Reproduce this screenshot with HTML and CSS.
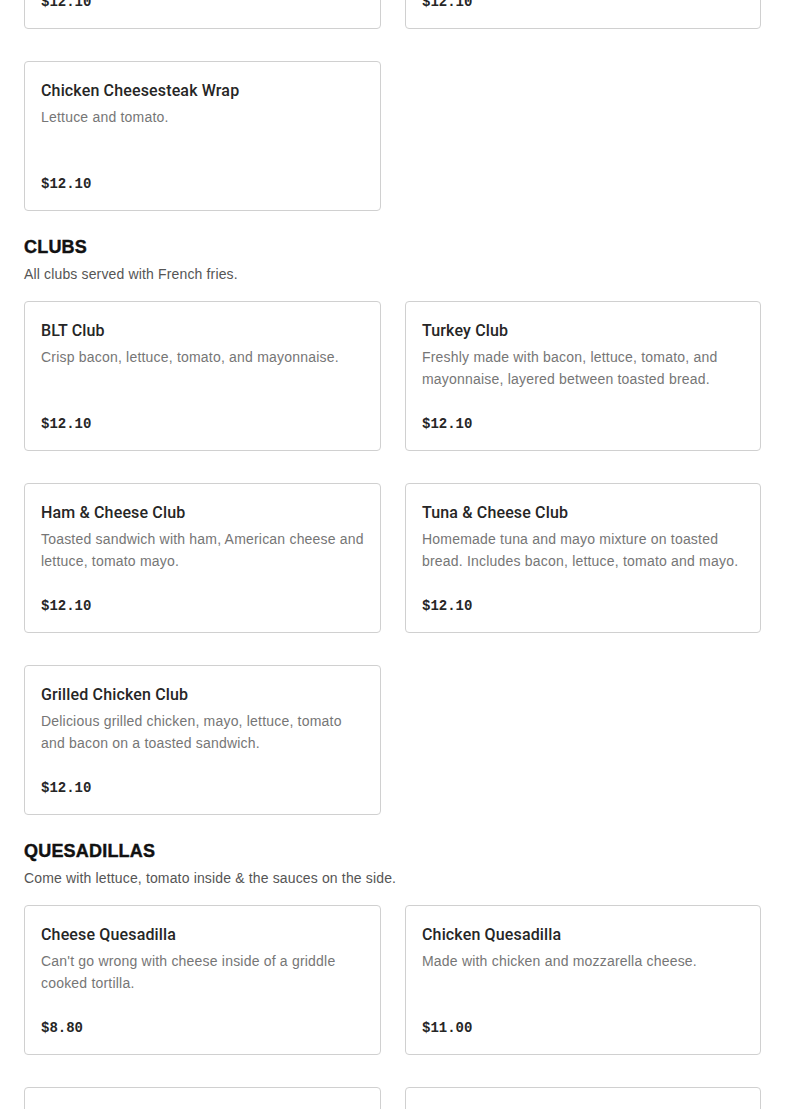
FILE: index.html
```html
<!DOCTYPE html>
<html lang="en">
<head>
<meta charset="utf-8">
<title>Menu</title>
<link rel="stylesheet" href="styles.css">
</head>
<body>
<main class="menu">
  <section class="section section-cut">
    <div class="grid">
      <article class="card">
        <h3 class="item-title">Chicken Caesar Wrap</h3>
        <p class="item-desc">Grilled chicken, romaine lettuce and Caesar dressing.</p>
        <p class="item-price">$12.10</p>
      </article>
      <article class="card">
        <h3 class="item-title">Buffalo Chicken Wrap</h3>
        <p class="item-desc">Crispy chicken tossed in buffalo sauce.</p>
        <p class="item-price">$12.10</p>
      </article>
      <article class="card">
        <h3 class="item-title">Chicken Cheesesteak Wrap</h3>
        <p class="item-desc">Lettuce and tomato.</p>
        <p class="item-price">$12.10</p>
      </article>
    </div>
  </section>

  <section class="section">
    <h2 class="section-title">CLUBS</h2>
    <p class="section-sub">All clubs served with French fries.</p>
    <div class="grid">
      <article class="card">
        <h3 class="item-title">BLT Club</h3>
        <p class="item-desc">Crisp bacon, lettuce, tomato, and mayonnaise.</p>
        <p class="item-price">$12.10</p>
      </article>
      <article class="card">
        <h3 class="item-title">Turkey Club</h3>
        <p class="item-desc">Freshly made with bacon, lettuce, tomato, and mayonnaise, layered between toasted bread.</p>
        <p class="item-price">$12.10</p>
      </article>
      <article class="card">
        <h3 class="item-title">Ham &amp; Cheese Club</h3>
        <p class="item-desc">Toasted sandwich with ham, American cheese and lettuce, tomato mayo.</p>
        <p class="item-price">$12.10</p>
      </article>
      <article class="card">
        <h3 class="item-title">Tuna &amp; Cheese Club</h3>
        <p class="item-desc">Homemade tuna and mayo mixture on toasted bread. Includes bacon, lettuce, tomato and mayo.</p>
        <p class="item-price">$12.10</p>
      </article>
      <article class="card">
        <h3 class="item-title">Grilled Chicken Club</h3>
        <p class="item-desc">Delicious grilled chicken, mayo, lettuce, tomato and bacon on a toasted sandwich.</p>
        <p class="item-price">$12.10</p>
      </article>
    </div>
  </section>

  <section class="section">
    <h2 class="section-title">QUESADILLAS</h2>
    <p class="section-sub">Come with lettuce, tomato inside &amp; the sauces on the side.</p>
    <div class="grid">
      <article class="card">
        <h3 class="item-title">Cheese Quesadilla</h3>
        <p class="item-desc">Can't go wrong with cheese inside of a griddle cooked tortilla.</p>
        <p class="item-price">$8.80</p>
      </article>
      <article class="card">
        <h3 class="item-title">Chicken Quesadilla</h3>
        <p class="item-desc">Made with chicken and mozzarella cheese.</p>
        <p class="item-price">$11.00</p>
      </article>
      <article class="card">
        <h3 class="item-title">Veggie Quesadilla</h3>
        <p class="item-desc">Peppers, onions and mozzarella cheese.</p>
        <p class="item-price">$9.90</p>
      </article>
      <article class="card">
        <h3 class="item-title">Steak Quesadilla</h3>
        <p class="item-desc">Made with steak and mozzarella cheese.</p>
        <p class="item-price">$12.10</p>
      </article>
    </div>
  </section>
</main>
</body>
</html>
```

FILE: styles.css
```css
* { box-sizing: border-box; }

html, body {
  margin: 0;
  padding: 0;
  background: #ffffff;
  overflow: hidden;
}

body {
  font-family: "Liberation Sans", Arial, sans-serif;
  color: #2b2b2b;
}

.menu {
  padding: 0 24px;
  width: 785px;
}

.section {
  margin-top: 25px;
}

.section-cut {
  margin-top: -121px;
}

.section-title {
  margin: 0;
  font-family: "Liberation Sans", Arial, sans-serif;
  font-weight: 900;
  font-size: 18px;
  line-height: 22px;
  color: #111111;
  letter-spacing: 0.2px;
  -webkit-text-stroke: 0.4px #111111;
}

.section-sub {
  margin: 5px 0 16px 0;
  font-size: 14px;
  line-height: 22px;
  color: #555555;
  letter-spacing: 0.15px;
}

.grid {
  display: grid;
  grid-template-columns: 357px 356px;
  column-gap: 24px;
  row-gap: 32px;
}

.card {
  display: flex;
  flex-direction: column;
  min-height: 150px;
  padding: 17px 16px 15px 16px;
  border: 1px solid #d0d0d0;
  border-radius: 4px;
  background: #ffffff;
}

.item-title {
  margin: 0;
  font-family: Roboto, "Liberation Sans", Arial, sans-serif;
  font-size: 16px;
  font-weight: 500;
  line-height: 24px;
  color: #262626;
  letter-spacing: 0.15px;
}

.item-desc {
  margin: 3px 0 0 0;
  font-size: 14px;
  line-height: 22px;
  color: #767676;
  letter-spacing: 0.2px;
}

.item-price {
  margin: auto 0 0 0;
  padding-top: 22px;
  font-family: "Liberation Mono", "Courier New", monospace;
  font-weight: 700;
  font-size: 14px;
  line-height: 22px;
  color: #262626;
}
```
